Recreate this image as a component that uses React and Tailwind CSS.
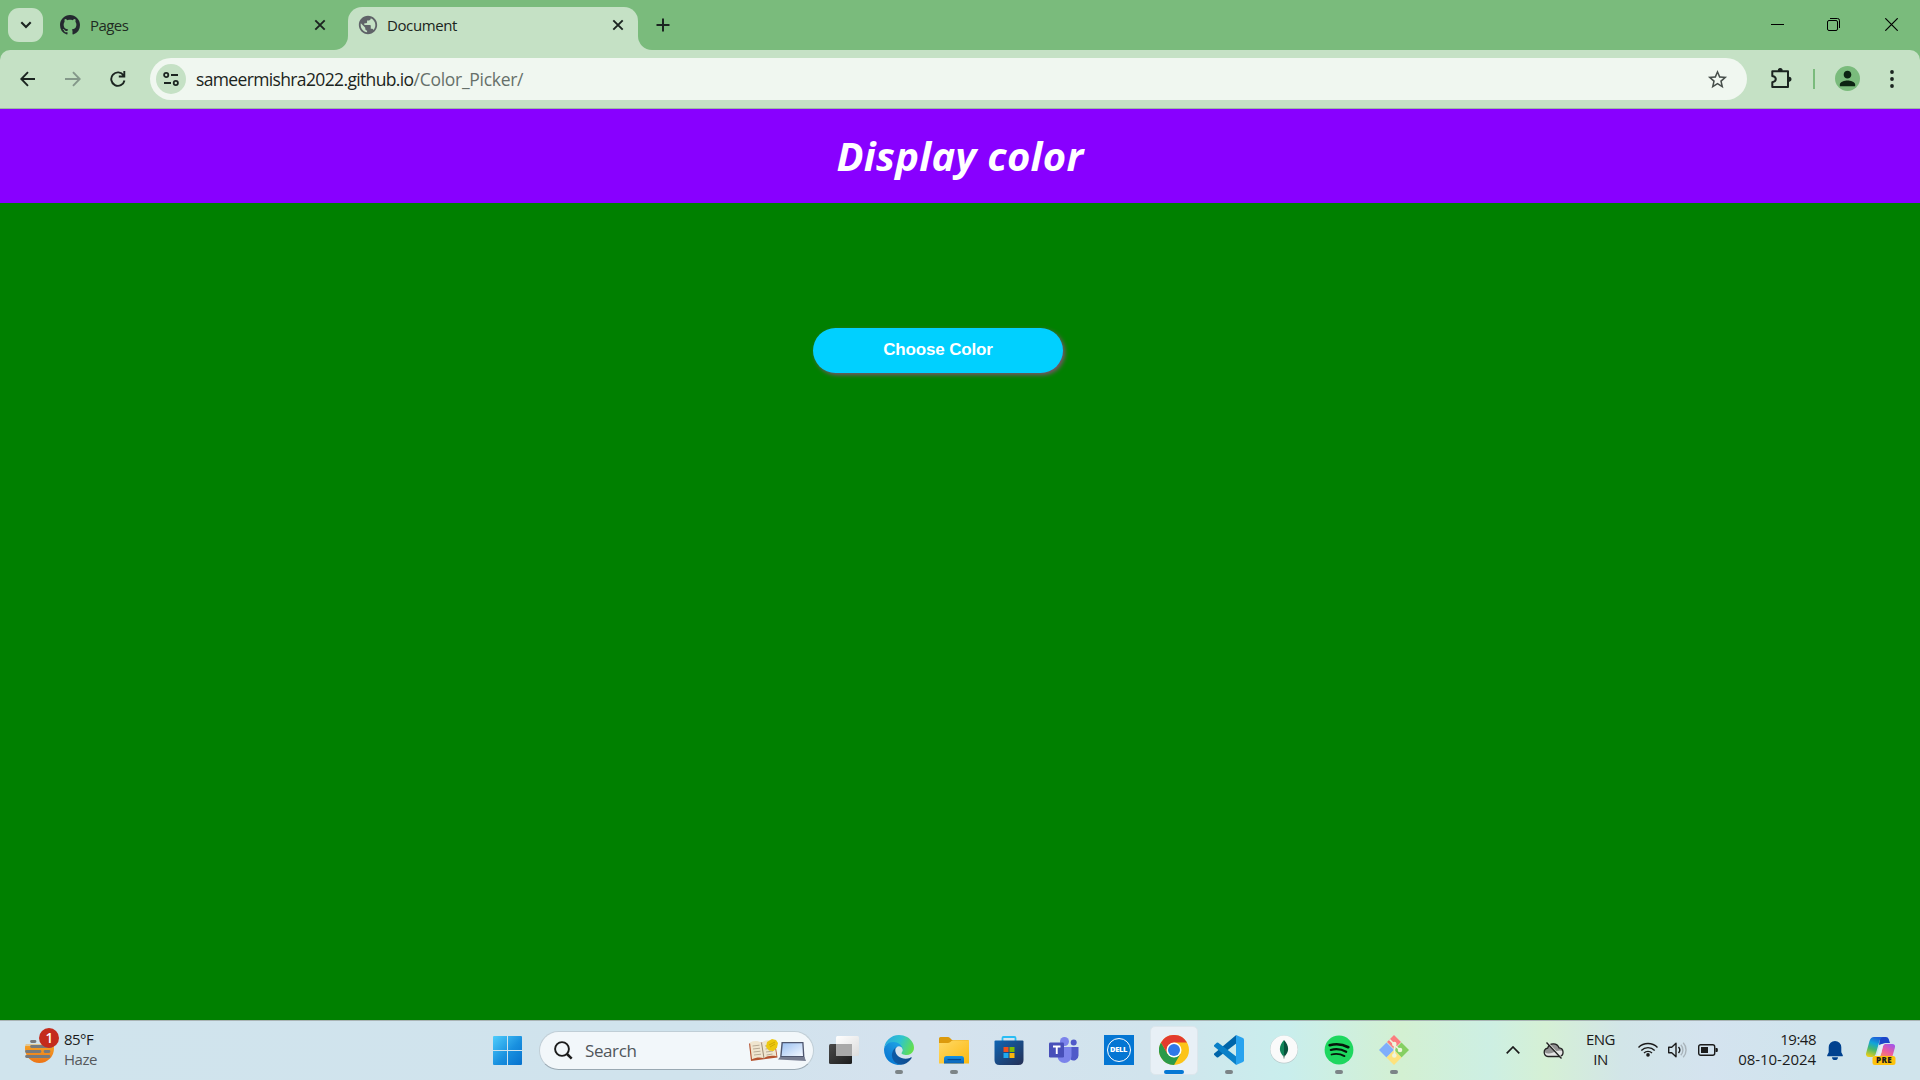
import React from "react";
import { MdPublic, MdStarBorder, MdPerson } from "react-icons/md";

const GithubMark = () => (
  <svg viewBox="0 0 16 16" className="h-5 w-5 shrink-0" fill="#24292f">
    <path d="M8 0c4.42 0 8 3.58 8 8a8.013 8.013 0 0 1-5.45 7.59c-.4.08-.55-.17-.55-.38 0-.27.01-1.13.01-2.2 0-.75-.25-1.23-.54-1.48 1.78-.2 3.65-.88 3.65-3.95 0-.88-.31-1.59-.82-2.15.08-.2.36-1.02-.08-2.12 0 0-.67-.22-2.2.82-.64-.18-1.32-.27-2-.27-.68 0-1.36.09-2 .27-1.53-1.03-2.2-.82-2.2-.82-.44 1.1-.16 1.92-.08 2.12-.51.56-.82 1.28-.82 2.15 0 3.06 1.86 3.75 3.64 3.95-.23.2-.44.55-.51 1.07-.46.21-1.61.55-2.33-.66-.15-.24-.6-.83-1.23-.82-.67.01-.27.38.01.53.34.19.73.9.82 1.13.16.45.68 1.31 2.69.94 0 .67.01 1.3.01 1.49 0 .21-.15.45-.55.38A7.995 7.995 0 0 1 0 8c0-4.42 3.58-8 8-8Z" />
  </svg>
);

const Close = () => (
  <svg viewBox="0 0 12 12" className="h-3 w-3 shrink-0" fill="none" stroke="#1b2420" strokeWidth="1.9">
    <path d="M1.3 1.3l9.4 9.4M10.7 1.3l-9.4 9.4" />
  </svg>
);

function TabStrip() {
  return (
    <div className="flex h-[50px] bg-[#7abb7c]">
      <button className="mt-2 ml-2 flex h-[34px] w-[35px] items-center justify-center rounded-[11px] bg-[#c5e1c5]">
        <svg viewBox="0 0 12 8" className="h-2 w-3" fill="none" stroke="#1b2420" strokeWidth="2.1">
          <path d="M1.3 1.3L6 6l4.700-4.700" />
        </svg>
      </button>
      <div className="ml-[17px] flex h-[50px] w-[288px] items-center">
        <GithubMark />
        <span className="ml-[10px] flex-1 text-[15px] tracking-[-0.55px] text-[#1f2b22]">Pages</span>
        <Close />
        <div className="ml-2 flex h-[14px] w-[14px] shrink-0 self-end bg-[#c5e1c5]">
          <div className="h-full w-full rounded-br-[14px] bg-[#7abb7c]" />
        </div>
      </div>
      <div className="mt-[7px] flex h-[43px] w-[290px] items-center rounded-t-[14px] bg-[#c5e1c5] pb-[7px] pl-[9px] pr-[14px]">
        <MdPublic className="h-[22px] w-[22px] shrink-0 text-[#5f6368]" />
        <span className="ml-2 flex-1 text-[15px] tracking-[-0.4px] text-[#1b2420]">Document</span>
        <Close />
      </div>
      <div className="h-[14px] w-[14px] self-end bg-[#c5e1c5]">
        <div className="h-full w-full rounded-bl-[14px] bg-[#7abb7c]" />
      </div>
      <svg viewBox="0 0 14 14" className="mt-[18px] ml-1 h-[14px] w-[14px]" fill="none" stroke="#1b2420" strokeWidth="2">
        <path d="M7 .5v13M.5 7h13" />
      </svg>
      <div className="ml-auto flex pt-[18px] pr-[22px] text-black">
        <svg viewBox="0 0 13 13" className="h-[13px] w-[13px]" stroke="currentColor">
          <path d="M0 6.500h13" />
        </svg>
        <svg viewBox="0 0 13 13" className="ml-[43px] h-[13px] w-[13px]" fill="none" stroke="currentColor">
          <rect x=".5" y="2.500" width="10" height="10" rx="1.500" />
          <path d="M3 .5h7.500a2 2 0 0 1 2 2V10" />
        </svg>
        <svg viewBox="0 0 13 13" className="ml-[45px] h-[13px] w-[13px]" fill="none" stroke="currentColor" strokeWidth="1.200">
          <path d="M.3.300l12.400 12.400M12.700.300L.3 12.700" />
        </svg>
      </div>
    </div>
  );
}

function Toolbar() {
  return (
    <div className="h-[59px] bg-[#7abb7c]">
      <div className="flex h-[59px] items-center rounded-t-[10px] border-b border-[#9db8a3] bg-[#c5e1c5]">
        <svg viewBox="0 0 16 16" className="ml-5 h-4 w-4" fill="none" stroke="#1b2420" strokeWidth="1.900">
          <path d="M15 8H1.500M8 1.200L1.300 8 8 14.800" />
        </svg>
        <svg viewBox="0 0 16 16" className="ml-[29px] h-4 w-4" fill="none" stroke="#84988a" strokeWidth="1.900">
          <path d="M0 8h14.500M8 1.200L14.700 8 8 14.800" />
        </svg>
        <svg viewBox="0 0 16 16" className="ml-[29px] h-4 w-4" fill="none" stroke="#1b2420" strokeWidth="1.900">
          <path d="M13.600 4.500A6.700 6.700 0 1 0 14.500 9.500M14.300 0v5.500H8.800" />
        </svg>
        <div className="ml-6 flex h-[42px] w-[1597px] items-center rounded-full bg-[#f0f7f0] pl-[6px] pr-[18px]">
          <div className="flex h-[30px] w-[30px] items-center justify-center rounded-full bg-[#c5e1c5]">
            <svg viewBox="0 0 16 16" className="h-4 w-4" fill="none" stroke="#1b2420" strokeWidth="1.800">
              <circle cx="3.200" cy="4" r="2.100" />
              <path d="M8 4h7M1 12h7" />
              <circle cx="12.800" cy="12" r="2.100" />
            </svg>
          </div>
          <span className="ml-[10px] text-[17.5px] tracking-[-0.64px] text-[#1b2420]">sameermishra2022.github.io</span>
          <span className="flex-1 text-[17.5px] tracking-[-0.28px] text-[#66706a]">/Color_Picker/</span>
          <MdStarBorder className="h-[23px] w-[23px] text-[#474f4b]" />
        </div>
        <svg viewBox="0 0 21 21" className="mb-px ml-6 h-[21px] w-[21px]" fill="none" stroke="#1b2420" strokeWidth="2">
          <path d="M1.300 3.300H17V19H1.300v-4.700c2.500-.5 3.500-1.700 3.500-3.200S3.800 8.400 1.300 7.900z" strokeLinejoin="round" />
          <path d="M7 3a2.200 2.200 0 0 1 4.400 0zM17.500 9a2.200 2.200 0 0 1 0 4.400z" fill="#1b2420" stroke="none" />
          <path d="M7.700 2.500a1.500 1.500 0 0 1 3 0M18 9.700a1.500 1.500 0 0 1 0 3" />
        </svg>
        <div className="ml-[21px] h-5 w-[2px] bg-[#7abb7c]" />
        <div className="mb-px ml-5 flex h-[25px] w-[25px] items-center justify-center rounded-full bg-[#7abb7c]">
          <MdPerson className="h-[23px] w-[23px] text-[#0c2412]" />
        </div>
        <svg viewBox="0 0 4 18" className="ml-[30px] h-[18px] w-1" fill="#1b2420">
          <circle cx="2" cy="2" r="1.900" />
          <circle cx="2" cy="9" r="1.900" />
          <circle cx="2" cy="16" r="1.900" />
        </svg>
      </div>
    </div>
  );
}

function TaskIcon({ children, dot }) {
  return (
    <div className="flex h-[59px] w-[55px] shrink-0 flex-col items-center pt-[14px]">
      {children}
      {dot && <div className="mt-[5px] h-1 w-2 rounded-full bg-[#7c8487]" />}
    </div>
  );
}

const I = "h-[30px] w-[30px] shrink-0";

const TaskView = () => (
  <svg viewBox="0 0 30 30" className={I}>
    <defs>
      <linearGradient id="tvd" x1="0" y1="0" x2="1" y2="1"><stop stopColor="#4a4a4a" /><stop offset="1" stopColor="#1d1d1d" /></linearGradient>
      <linearGradient id="tvl" x1="0" y1="0" x2="1" y2="1"><stop stopColor="#ffffff" /><stop offset="1" stopColor="#dcdcdc" /></linearGradient>
    </defs>
    <rect x="0" y="9" width="23" height="20" rx="1.500" fill="url(#tvd)" />
    <rect x="7" y="1" width="23" height="20" rx="1.500" fill="url(#tvl)" />
    <path d="M7 9h16v12H8.500A1.500 1.500 0 0 1 7 19.500z" fill="#a9a9a9" />
  </svg>
);

const Edge = () => (
  <svg viewBox="0 0 256 256" className={I}>
    <defs>
      <linearGradient id="e1" x1=".25" y1=".5" x2="1" y2=".5"><stop stopColor="#0c59a4" /><stop offset="1" stopColor="#114a8b" /></linearGradient>
      <linearGradient id="e2" x1=".7" y1=".2" x2=".2" y2="1"><stop stopColor="#1b9de2" /><stop offset=".5" stopColor="#1383d7" /><stop offset="1" stopColor="#0078d4" /></linearGradient>
      <linearGradient id="e3" x1="0" y1=".3" x2="1" y2=".6"><stop stopColor="#2aa7e0" /><stop offset=".5" stopColor="#2fc4cf" /><stop offset="1" stopColor="#65e04a" /></linearGradient>
    </defs>
    <path d="M231 190.500c-3.400 1.800-6.900 3.400-10.500 4.700a101.900 101.900 0 0 1-35.900 6.500c-47.300 0-88.500-32.500-88.500-74.300a31.500 31.500 0 0 1 16.400-27.300c-42.800 1.800-53.800 46.400-53.800 72.500 0 74 68.100 81.400 82.800 81.400 7.900 0 19.800-2.300 27-4.600l1.300-.4a128.300 128.300 0 0 0 66.600-52.800 4 4 0 0 0-5.400-5.700z" fill="url(#e1)" />
    <path d="M105.700 241.400a79.200 79.200 0 0 1-22.700-21.300 80.700 80.700 0 0 1 29.500-120c3.200-1.500 8.500-4.100 15.600-4a32.400 32.400 0 0 1 25.700 13 31.900 31.900 0 0 1 6.300 18.700c0-.2 24.500-79.600-80-79.600-43.900 0-80 41.700-80 78.200a130.200 130.200 0 0 0 12.100 56 128 128 0 0 0 156.400 67 75.500 75.500 0 0 1-62.800-8z" fill="url(#e2)" />
    <path d="M152.300 148.900c-.9 1-3.400 2.500-3.400 5.600 0 2.600 1.700 5.200 4.800 7.300 14.300 10 41.400 8.600 41.500 8.600a59.600 59.600 0 0 0 30.300-8.300 61.400 61.400 0 0 0 30.400-52.900c.3-22.400-8-37.300-11.300-43.900C223.500 23.900 177.700 0 128 0A128 128 0 0 0 0 126.200c.5-36.500 36.800-66 80-66 3.500 0 23.500.3 42 10a72.600 72.600 0 0 1 30.900 29.300c6.100 10.600 7.200 24.100 7.200 29.500s-2.700 13.300-7.800 19.900z" fill="url(#e3)" />
  </svg>
);

const Explorer = () => (
  <svg viewBox="0 0 30 30" className={I}>
    <defs>
      <linearGradient id="fx" x1="0" y1="0" x2="1" y2="1"><stop stopColor="#ffd968" /><stop offset="1" stopColor="#fcb90f" /></linearGradient>
      <linearGradient id="fb" x1="0" y1="0" x2="0" y2="1"><stop stopColor="#1593e4" /><stop offset="1" stopColor="#0b61b5" /></linearGradient>
    </defs>
    <path d="M0 3.500Q0 2 1.500 2H9q1 0 2 1l2 2h15.500Q30 5 30 6.500V14H0z" fill="#dc9a0c" />
    <path d="M0 8h9q1 0 2-.8l1.800-1.400Q13.500 5.200 14.500 5.200H30V28.500H0z" fill="url(#fx)" />
    <path d="M5 28.500V23.500Q5 21 7.500 21h15Q25 21 25 23.500v5z" fill="url(#fb)" />
    <path d="M9 24.700h12.500" stroke="#064a91" strokeWidth="1.200" strokeLinecap="round" />
  </svg>
);

const Store = () => (
  <svg viewBox="0 0 30 30" className={I}>
    <defs>
      <linearGradient id="st" x1="0" y1="0" x2="1" y2="1"><stop stopColor="#0f65b4" /><stop offset="1" stopColor="#252f54" /></linearGradient>
    </defs>
    <path d="M8.500 7V3Q8.500 2 9.500 2h11q1 0 1 1v4" fill="none" stroke="#29bdf4" strokeWidth="1.800" />
    <path d="M.5 6.500Q.5 5.500 1.500 5.500h27q1 0 1 1V25q0 5-5 5h-19q-5 0-5-5z" fill="url(#st)" />
    <path d="M9.500 12h5v5h-5z" fill="#f1511b" />
    <path d="M15.500 12h5v5h-5z" fill="#80bb03" />
    <path d="M9.500 18h5v5h-5z" fill="#1fa9ee" />
    <path d="M15.500 18h5v5h-5z" fill="#fcb60c" />
  </svg>
);

const Teams = () => (
  <svg viewBox="0 0 30 30" className={I}>
    <circle cx="24.700" cy="7.500" r="3" fill="#5059c9" />
    <path d="M20 12h9.500v8.500a5 5 0 0 1-8 4z" fill="#5059c9" />
    <circle cx="15.500" cy="6.500" r="4.500" fill="#7b83eb" />
    <path d="M9 12h13.500v9a7 7 0 0 1-14 0z" fill="#7b83eb" />
    <rect x="0" y="7.500" width="15" height="15" rx="1.300" fill="#474fb9" />
    <path d="M4 11.500h7.500M7.750 11.500V19" stroke="#fff" strokeWidth="1.900" />
  </svg>
);

const Dell = () => (
  <div className="flex h-[30px] w-[30px] shrink-0 items-center justify-center bg-[#0476d3]">
    <div className="flex h-6 w-6 items-center justify-center rounded-full border-[1.5px] border-white text-[7.5px] leading-none font-extrabold tracking-[-0.3px] text-white">DELL</div>
  </div>
);

const Chrome = () => (
  <svg viewBox="0 0 48 48" className={I}>
    <circle cx="24" cy="24" r="24" fill="#fcc419" />
    <path d="M24 48A24 24 0 0 1 3.200 12l10.400 18L24 36l10.400-6z" fill="#2a9a48" />
    <path d="M13.600 18l0 12L3.200 12A24 24 0 0 1 44.800 12H24z" fill="#e33b2e" />
    <circle cx="24" cy="24" r="12" fill="#fff" />
    <circle cx="24" cy="24" r="9.600" fill="#2f78e8" />
  </svg>
);

const Code = () => (
  <svg viewBox="0 0 30 30" className={I}>
    <path d="M0 19.800l2.700 2.400q.8.600 1.600 0L22.200 8.500V0L.2 18.400q-.8.700-.2 1.400z" fill="#0065a9" />
    <path d="M0 10.200l2.700-2.400q.8-.6 1.600 0L22.200 21.500V30L.2 11.600q-.8-.7-.2-1.400z" fill="#0a80c8" />
    <path d="M22 30V0l7 3q1 .5 1 1.700v20.600q0 1.200-1 1.700z" fill="#28a3ef" />
  </svg>
);

const Mongo = () => (
  <svg viewBox="0 0 30 30" className={I}>
    <circle cx="15" cy="14.500" r="14" fill="#b9c9ca" />
    <circle cx="15" cy="14.200" r="13.600" fill="#fafafa" />
    <path d="M15 5c-5.500 6-5.500 12 0 17z" fill="#10855a" />
    <path d="M15 5c5.500 6 5.500 12 0 17z" fill="#08523c" />
    <path d="M15 20v3.500" stroke="#68877b" />
  </svg>
);

const Spotify = () => (
  <svg viewBox="0 0 30 30" className={I}>
    <circle cx="15" cy="15" r="14.400" fill="#1ed75f" />
    <g fill="none" stroke="#06150b" strokeLinecap="round">
      <path d="M5.700 10.200c6-1.600 13-1 18.600 2" strokeWidth="2.700" />
      <path d="M6.800 15c5-1.400 10.800-.7 15.400 1.800" strokeWidth="2.200" />
      <path d="M7.500 19.500c4.500-1.100 9-.6 13 1.600" strokeWidth="1.800" />
    </g>
  </svg>
);

const Git = () => (
  <svg viewBox="0 0 30 30" className={I}>
    <path d="M15 0l7 7-7 7-7-7z" fill="#fb7d7e" />
    <path d="M22.500 7.500L30 15l-7.500 7.500L15 15z" fill="#85cf62" />
    <path d="M7.500 7.500L15 15l-7.500 7.500L0 15z" fill="#7faefb" />
    <path d="M15 15l7.500 7.500L15 30l-7.500-7.500z" fill="#fde27d" />
    <path d="M10.500 4.500l5 5V21M15.500 10l5.500 5" fill="none" stroke="#eef5dc" strokeWidth="1.600" />
    <circle cx="15.300" cy="9" r="2.300" fill="#eef5dc" />
    <circle cx="21" cy="15" r="2.300" fill="#eef5dc" />
    <circle cx="15.300" cy="20.500" r="2.300" fill="#eef5dc" />
  </svg>
);

function SearchArt() {
  return (
    <svg viewBox="0 0 58 24" className="h-6 w-[58px]">
      <defs>
        <linearGradient id="lap" x1="0" y1="0" x2="1" y2="1"><stop stopColor="#9dc2f2" /><stop offset="1" stopColor="#f2f7ff" /></linearGradient>
      </defs>
      <path d="M1 4.500l26-2 2.500 16L3 22z" fill="#b5532f" />
      <path d="M2 3.500c4-2 8-2 11.500.3 4-3 8-3.500 12.500-2l2.500 15.500c-5-1-9-.5-12.500 2-4-1.500-8-1-12 1z" fill="#efe5cf" />
      <path d="M13.500 3.800L16 19.300" stroke="#9c8a72" />
      <path d="M4.500 7l7-.8M5 10l7-.8M5.500 13l7-.8M6 16l7-.8M17 7l6-1M17.500 10l7-1M18 13l7-1M18.500 16l6-1" stroke="#a99b86" strokeWidth=".8" />
      <path d="M24 0l4 1 2 3-1 4.500-3.500 3.500-4.500-.5-3-3.500 1-5z" fill="#edc80f" />
      <path d="M21 6l6-3M22 8l5-3" stroke="#c7a006" strokeWidth=".8" />
      <path d="M33.500 3h22l1 16h-24.500z" fill="#4e566f" />
      <path d="M34.800 4.300h19.500l.7 12.700H33.600z" fill="url(#lap)" />
      <path d="M32 18h24.500l1.500 4-28-1.500z" fill="#777d91" />
    </svg>
  );
}

function Weather() {
  return (
    <div className="flex w-[493px] shrink-0 pl-[25px]">
      <svg viewBox="0 0 36 38" className="mt-[6px] h-[38px] w-9">
        <defs>
          <linearGradient id="sun" x1="0" y1="0" x2="0" y2="1"><stop stopColor="#fbbd2e" /><stop offset="1" stopColor="#ec7417" /></linearGradient>
        </defs>
        <circle cx="14.500" cy="21.500" r="14.500" fill="url(#sun)" />
        <path d="M0 0h16v17H0z" fill="#d0e4ed" />
        <path d="M0 14h29v5H0z" fill="#d0e4ed" opacity=".55" />
        <g stroke="#777a7d" strokeWidth="2.800" strokeLinecap="round">
          <path d="M6.500 14.500H10M6.500 19.500H26M1.500 24.500H15M20 24.500h4M1.500 29.500H24" />
        </g>
        <circle cx="24" cy="11" r="10" fill="#c42b1c" />
        <text x="24.300" y="15.700" fill="#fff" fontSize="13.500" fontWeight="600" textAnchor="middle">1</text>
      </svg>
      <div className="ml-[3px] pt-2 text-[15px] leading-5">
        <div className="tracking-[-0.55px] text-[#1b1b1b]">85°F</div>
        <div className="tracking-[-0.45px] text-[#56595c]">Haze</div>
      </div>
    </div>
  );
}

function Tray() {
  return (
    <div className="ml-auto flex h-[59px] shrink-0 text-[#1b1b1b]">
      <svg viewBox="0 0 14 8" className="mt-[25px] h-2 w-[14px]" fill="none" stroke="currentColor" strokeWidth="1.700">
        <path d="M.7 7.300L7 1l6.300 6.300" />
      </svg>
      <svg viewBox="0 0 21 17" className="mt-[21px] ml-[23px] h-[17px] w-[21px]">
        <path d="M5 14.500a4.200 4.200 0 0 1-.4-8.300A6 6 0 0 1 16 5.800a4.400 4.400 0 0 1 .5 8.700z" fill="#e4e4e4" />
        <path d="M4.600 6.200A6 6 0 0 1 16 5.800c2 .2 3.500 1.500 4 3.200-6-2-9 2-14 2.500-3 .3-4-1-4.500-2 .5-1.900 1.600-3 3.100-3.300z" fill="#929292" />
        <path d="M5 14.500a4.200 4.200 0 0 1-.4-8.300A6 6 0 0 1 16 5.800a4.400 4.400 0 0 1 .5 8.700z" fill="none" stroke="#222" strokeWidth="1.300" />
        <path d="M4.700.500l14 15.500" stroke="#e8efe6" strokeWidth="1.400" />
        <path d="M3.500.5l15 16" stroke="#222" strokeWidth="1.400" />
      </svg>
      <div className="ml-5 w-[33px] pt-2 text-center text-[15px] leading-5 tracking-[-0.5px]">
        <div>ENG</div>
        <div>IN</div>
      </div>
      <svg viewBox="0 0 20 15" className="mt-[21px] ml-[21px] h-[15px] w-5" fill="none" stroke="currentColor" strokeWidth="1.400">
        <path d="M.5 5.500a13.400 13.400 0 0 1 19 0M3.300 8.400a9.500 9.500 0 0 1 13.400 0M6 11a5.700 5.700 0 0 1 8 0" />
        <circle cx="10" cy="12.900" r="1.800" fill="currentColor" stroke="none" />
      </svg>
      <svg viewBox="0 0 20 16" className="mt-[21px] ml-[10px] h-4 w-5" fill="none" stroke="currentColor" strokeWidth="1.400">
        <path d="M.7 5.200h3L8 1.200v13.600l-4.300-4h-3z" strokeLinejoin="round" />
        <path d="M10.500 5a4.500 4.500 0 0 1 0 6" />
        <path d="M12.800 2.800a7.500 7.500 0 0 1 0 10.400M15.200.8a10.500 10.500 0 0 1 0 14.400" stroke="#a9b3ba" />
      </svg>
      <svg viewBox="0 0 20 12" className="mt-[23px] ml-[10px] h-3 w-5" fill="none" stroke="currentColor" strokeWidth="1.400">
        <rect x=".7" y=".7" width="16" height="10.600" rx="2" />
        <path d="M3 3h7v6H3zM17.500 4h1.200q1.100 0 1.100 1.100v1.800q0 1.100-1.100 1.100h-1.200z" fill="currentColor" stroke="none" />
      </svg>
      <div className="ml-5 w-[78px] pt-2 text-right text-[15px] leading-5">
        <div className="tracking-[-0.5px]">19:48</div>
        <div className="tracking-[-0.05px]">08-10-2024</div>
      </div>
      <svg viewBox="0 0 16 19" className="mt-5 ml-[11px] h-[19px] w-4" fill="#00418f">
        <path d="M8 0a6.300 6.300 0 0 1 6.300 6.300v5l1.500 3q.3 1-.8 1H1q-1.100 0-.8-1l1.500-3v-5A6.300 6.300 0 0 1 8 0zM5 16.200h6a3 3 0 0 1-6 0z" />
      </svg>
      <svg viewBox="0 0 30 30" className="mt-[15px] mr-6 ml-[23px] h-[30px] w-[30px]">
        <defs>
          <linearGradient id="c1" x1=".5" y1="0" x2=".2" y2="1"><stop stopColor="#1c63d8" /><stop offset=".3" stopColor="#12a5d8" /><stop offset=".6" stopColor="#48b96b" /><stop offset="1" stopColor="#f2cf15" /></linearGradient>
          <linearGradient id="c2" x1=".8" y1="0" x2=".2" y2="1"><stop stopColor="#a455e8" /><stop offset=".5" stopColor="#ee5c9b" /><stop offset="1" stopColor="#fa9a49" /></linearGradient>
        </defs>
        <path d="M14 1h6q2 0 2.700 2L24 7h-5l-6 2z" fill="#1a45c9" />
        <path d="M8 1h9c-3 1-3.500 4-4.500 7.500L10 17q-1 4-4 4H3q-4 0-2.700-4.500L3.500 5Q4.700 1 8 1z" fill="url(#c1)" />
        <path d="M19 8h7q4 0 2.800 4L26.500 20q-1 3-4 3H11c3-1 3.500-3 4.300-6L17 10q.5-2 2-2z" fill="url(#c2)" />
        <path d="M19 8q-1.500 0-2 2l-1.700 7q-.8 3-2.300 4h-4q2-1 2.800-4l1.700-6q.8-3 3-3z" fill="#e6eef3" />
        <rect x="6.500" y="20" width="23" height="9" rx="2.500" fill="#fdc20c" />
        <text x="18" y="27.300" fontSize="8" fontWeight="800" letterSpacing=".3" textAnchor="middle" fill="#1b1b1b">PRE</text>
      </svg>
    </div>
  );
}

function Taskbar() {
  return (
    <div className="flex h-[60px] border-t border-[#a9b4b5] bg-[linear-gradient(90deg,#d0e4ed_0%,#d0e3ed_36%,#d5e2ee_48%,#d1e4ed_60%,#c9eeed_67%,#d3f0d2_73%,#cdefe3_77.500%,#d5f0d5_80.500%,#d2e5e8_84.500%,#d4e3ef_89%,#d0e4ed_94%,#d0e4ec_100%)]">
      <Weather />
      <svg viewBox="0 0 29 29" className="mt-[15px] h-[29px] w-[29px] shrink-0">
        <defs>
          <linearGradient id="win" x1="0" y1="0" x2="1" y2="1"><stop stopColor="#4fcdfc" /><stop offset=".55" stopColor="#1990df" /><stop offset="1" stopColor="#0671cd" /></linearGradient>
        </defs>
        <path d="M1 0h13v14H0V1q0-1 1-1zM15 0h13q1 0 1 1v13H15zM0 15h14v14H1q-1 0-1-1zM15 15h14v13q0 1-1 1H15z" fill="url(#win)" />
      </svg>
      <div className="mt-[10px] ml-[17px] flex h-[39px] w-[275px] shrink-0 items-center rounded-full border border-[#c0ced6] border-b-[#9aa9b3] bg-[#f2f7fa] pl-[14px] pr-[7px]">
        <svg viewBox="0 0 19 19" className="h-[19px] w-[19px]" fill="none" stroke="#1b1b1b">
          <circle cx="8" cy="8" r="6.900" strokeWidth="1.900" />
          <path d="M13 13l4.700 4.700" strokeWidth="2.500" />
        </svg>
        <span className="ml-3 flex-1 text-[17px] tracking-[-0.4px] text-[#50565a]">Search</span>
        <SearchArt />
      </div>
      <div className="ml-[2px] flex">
        <TaskIcon><TaskView /></TaskIcon>
        <TaskIcon dot><Edge /></TaskIcon>
        <TaskIcon dot><Explorer /></TaskIcon>
        <TaskIcon><Store /></TaskIcon>
        <TaskIcon><Teams /></TaskIcon>
        <TaskIcon><Dell /></TaskIcon>
        <div className="mt-[5px] mr-[3.500px] ml-[3.500px] flex h-[49px] w-12 shrink-0 flex-col items-center rounded-[5px] border border-[#dce6ec] bg-[#e8f0f6] pt-2">
          <Chrome />
          <div className="mt-[5px] h-1 w-5 shrink-0 rounded-full bg-[#0678d4]" />
        </div>
        <TaskIcon dot><Code /></TaskIcon>
        <TaskIcon><Mongo /></TaskIcon>
        <TaskIcon dot><Spotify /></TaskIcon>
        <TaskIcon dot><Git /></TaskIcon>
      </div>
      <Tray />
    </div>
  );
}

export default function App() {
  return (
    <div className="flex h-[1080px] w-[1920px] flex-col overflow-hidden bg-[#008000] font-['Open_Sans','Noto_Sans',sans-serif] whitespace-nowrap">
      <TabStrip />
      <Toolbar />
      <header className="flex h-[94px] shrink-0 items-center justify-center bg-[#8800ff]">
        <h1 className="text-[40px] leading-none font-bold tracking-[0.3px] text-white italic">Display color</h1>
      </header>
      <main className="flex-1 pt-[125px] pl-[813px]">
        <button className="h-[45px] w-[250px] rounded-[25px] bg-[#00d0ff] pb-px font-['Liberation_Sans',Arial,sans-serif] text-[17px] font-bold tracking-[-0.15px] text-white shadow-[2px_2px_4px_#80506f]">Choose Color</button>
      </main>
      <Taskbar />
    </div>
  );
}
